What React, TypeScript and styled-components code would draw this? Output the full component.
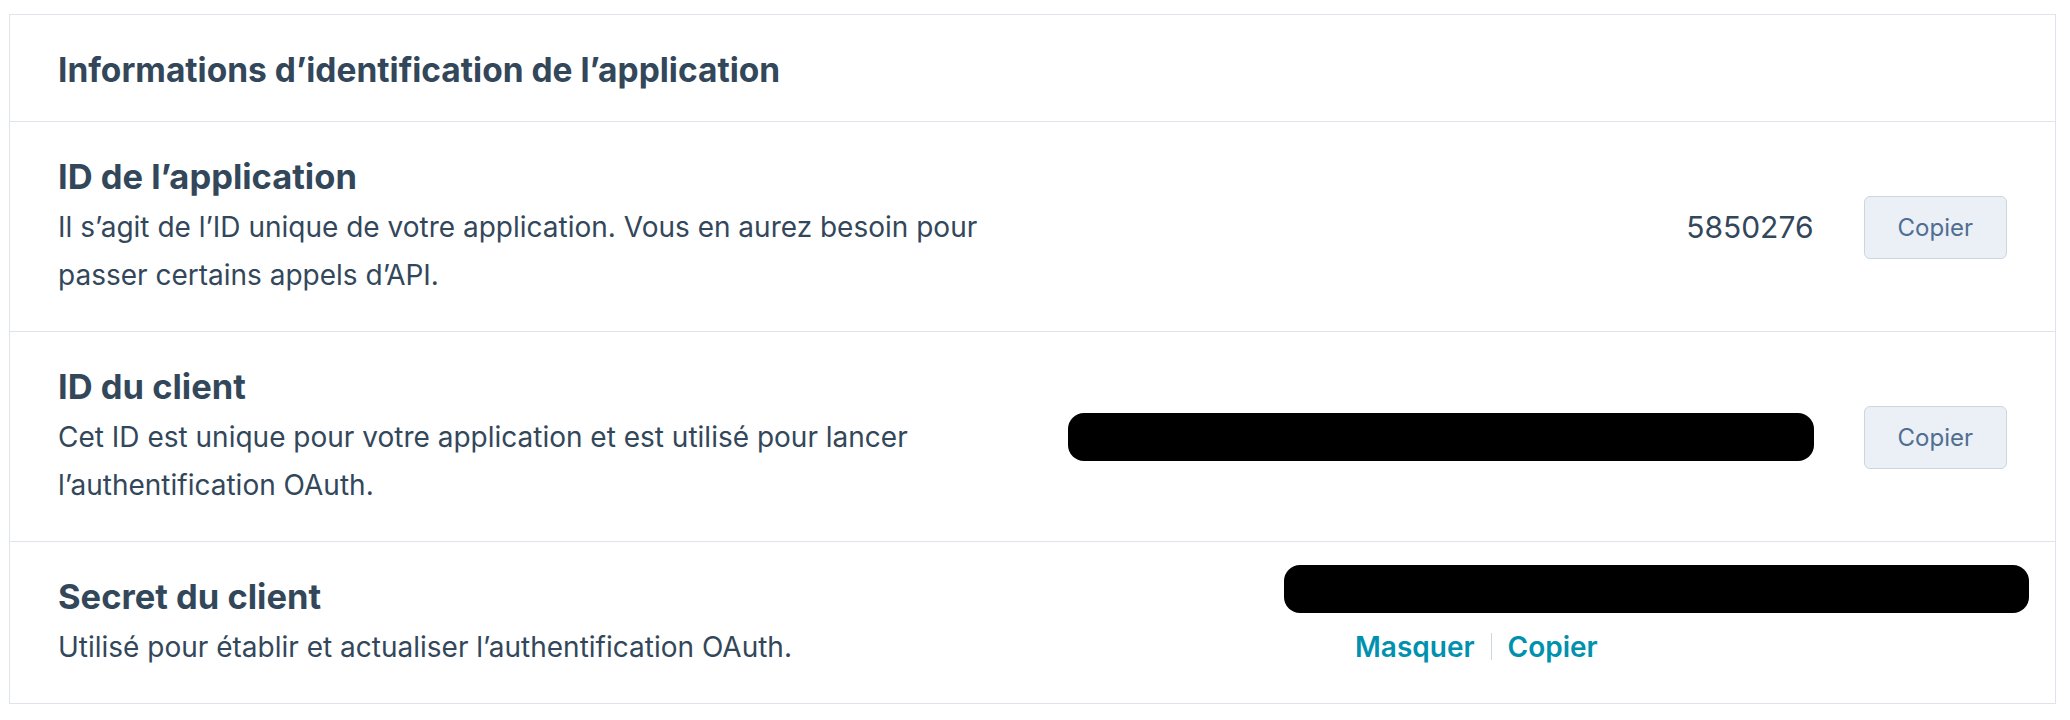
import styled, { createGlobalStyle } from "styled-components";

const GlobalStyle = createGlobalStyle`
    body {
        margin: 0;
        background: #ffffff;
        font-family: Inter, "Noto Sans", "Liberation Sans", sans-serif;
        color: #33475b;
    }
`;

type Field = {
    title: string;
    description: string;
    value?: string;
    hidden?: boolean;
};

const fields: Field[] = [
    {
        title: "ID de l’application",
        description: "Il s’agit de l’ID unique de votre application. Vous en aurez besoin pour passer certains appels d’API.",
        value: "5850276",
    },
    {
        title: "ID du client",
        description: "Cet ID est unique pour votre application et est utilisé pour lancer l’authentification OAuth.",
        hidden: true,
    },
];

export default function App() {
    return (
        <Page>
            <GlobalStyle />
            <Card>
                <CardHeader>Informations d’identification de l’application</CardHeader>

                {fields.map((f) => (
                    <Row key={f.title}>
                        <Info>
                            <Title>{f.title}</Title>
                            <Description>{f.description}</Description>
                        </Info>
                        <ValueGroup>
                            {f.hidden ? <Redacted $width={746} /> : <Value>{f.value}</Value>}
                            <CopyButton type="button">Copier</CopyButton>
                        </ValueGroup>
                    </Row>
                ))}

                {/* client secret has text links instead of a button */}
                <Row $last>
                    <Info>
                        <Title>Secret du client</Title>
                        <Description>Utilisé pour établir et actualiser l’authentification OAuth.</Description>
                    </Info>
                    <SecretBlock>
                        <Redacted $width={745} />
                        <LinkRow>
                            <TextLink href="#">Masquer</TextLink>
                            <Divider />
                            <TextLink href="#">Copier</TextLink>
                        </LinkRow>
                    </SecretBlock>
                </Row>
            </Card>
        </Page>
    );
}

const Page = styled.div`
    padding: 14px 14px 0 9px;
`;

const Card = styled.section`
    border: 1px solid #dfe3eb;
    background: #fff;
`;

const CardHeader = styled.h2`
    margin: 0;
    padding: 31px 48px 27px;
    font-size: 33.5px;
    line-height: 48px;
    font-weight: 700;
    color: #33475b;
    border-bottom: 1px solid #dfe3eb;
`;

const Row = styled.div<{ $last?: boolean }>`
    display: flex;
    align-items: center;
    justify-content: space-between;
    padding: 33px 48px 32px;
    border-bottom: ${(p) => (p.$last ? "none" : "1px solid #dfe3eb")};
`;

const Info = styled.div`
    max-width: 960px;
`;

const Title = styled.h3`
    margin: 0 0 4px;
    font-size: 34.5px;
    line-height: 44px;
    font-weight: 700;
    color: #33475b;
`;

const Description = styled.p`
    margin: 0;
    font-size: 28px;
    line-height: 48px;
    color: #33475b;
`;

const ValueGroup = styled.div`
    display: flex;
    align-items: center;
    gap: 50px;
`;

const Value = styled.span`
    font-size: 30px;
    line-height: 40px;
    color: #33475b;
`;

const Redacted = styled.span<{ $width: number }>`
    display: block;
    width: ${(p) => p.$width}px;
    height: 48px;
    background: #000;
    border-radius: 16px;
`;

const CopyButton = styled.button`
    height: 63px;
    padding: 0 33px;
    background: #eaf0f6;
    border: 1px solid #cbd6e2;
    border-radius: 6px;
    color: #506e91;
    font-family: inherit;
    font-size: 24px;
    cursor: pointer;
`;

const SecretBlock = styled.div`
    display: flex;
    flex-direction: column;
    align-items: flex-start;
    gap: 14px;
    margin: -15px -22px 0 0;
`;

const LinkRow = styled.div`
    display: flex;
    align-items: center;
    gap: 16px;
    padding-left: 71px;
`;

const TextLink = styled.a`
    font-size: 28px;
    line-height: 40px;
    font-weight: 600;
    color: #0091ae;
    text-decoration: none;
`;

const Divider = styled.span`
    width: 1px;
    height: 27px;
    background: #cbd6e2;
`;
